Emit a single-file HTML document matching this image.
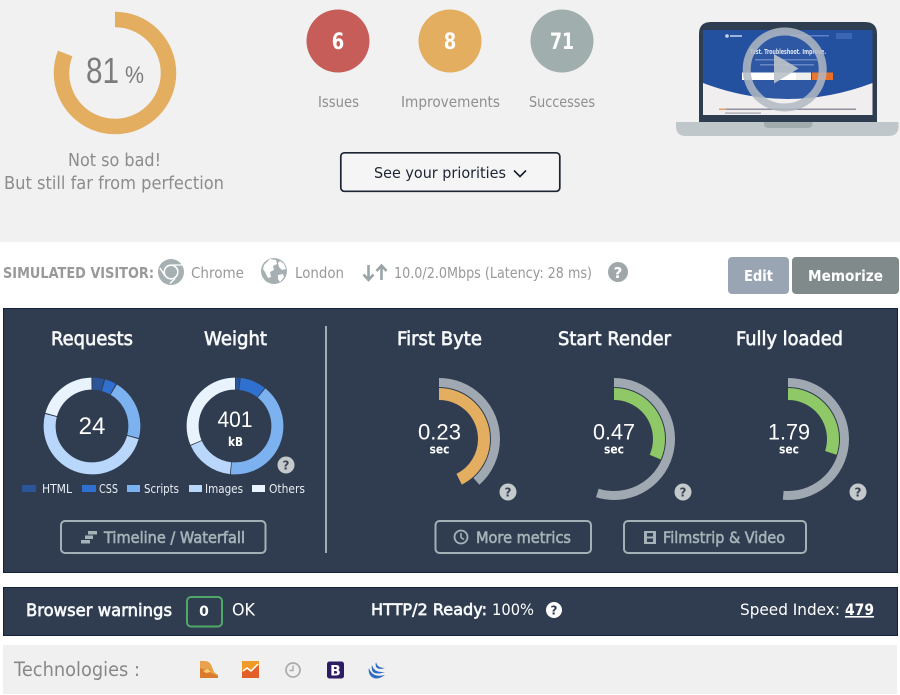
<!DOCTYPE html>
<html><head><meta charset="utf-8"><title>Report</title>
<style>
html,body{margin:0;padding:0;background:#fff;width:900px;height:695px;overflow:hidden}
svg{display:block}
text{font-family:"DejaVu Sans","Liberation Sans",sans-serif}
.l{font-family:"Liberation Sans",sans-serif}
.w{fill:#f6f8fa;stroke:#f6f8fa;stroke-width:.65}
.g{fill:#a5b3b8;stroke:#a5b3b8;stroke-width:.6}
circle.a{fill:none}
</style></head><body>
<svg width="900" height="695" viewBox="0 0 900 695" xmlns="http://www.w3.org/2000/svg">
<rect width="900" height="242" fill="#f1f1f2"/>
<!-- score ring -->
<circle class="a" cx="115" cy="73" r="53.500" stroke="#e4ae60" stroke-width="15.500" pathLength="100" stroke-dasharray="81 100" transform="rotate(-90 115 73)"/>
<text class="l" x="86" y="83" font-size="36" fill="#7c7c7c" textLength="33" lengthAdjust="spacingAndGlyphs">81</text>
<text class="l" x="125" y="83" font-size="24" fill="#7c7c7c" textLength="19" lengthAdjust="spacingAndGlyphs">%</text>
<text x="68" y="166" font-size="17.500" fill="#8c8c8c" textLength="93" lengthAdjust="spacingAndGlyphs">Not so bad!</text>
<text x="4" y="189" font-size="17.500" fill="#8c8c8c" textLength="220" lengthAdjust="spacingAndGlyphs">But still far from perfection</text>
<!-- counters -->
<circle cx="338" cy="41" r="31.500" fill="#c65d59"/>
<circle cx="450" cy="41" r="31.500" fill="#e4ae60"/>
<circle cx="562" cy="41" r="31.500" fill="#a1aeae"/>
<text x="338" y="49" font-size="22" font-weight="700" fill="#fff" text-anchor="middle" textLength="12.500" lengthAdjust="spacingAndGlyphs">6</text>
<text x="450" y="49" font-size="22" font-weight="700" fill="#fff" text-anchor="middle" textLength="12.500" lengthAdjust="spacingAndGlyphs">8</text>
<text x="562" y="49" font-size="22" font-weight="700" fill="#fff" text-anchor="middle" textLength="24" lengthAdjust="spacingAndGlyphs">71</text>
<text x="318" y="107" font-size="15" fill="#8f8f8f" textLength="41" lengthAdjust="spacingAndGlyphs">Issues</text>
<text x="401" y="107" font-size="15" fill="#8f8f8f" textLength="99" lengthAdjust="spacingAndGlyphs">Improvements</text>
<text x="529" y="107" font-size="15" fill="#8f8f8f" textLength="66" lengthAdjust="spacingAndGlyphs">Successes</text>
<rect x="340.800" y="152.800" width="219" height="38.500" rx="3.500" fill="#f5f5f5" stroke="#1c2433" stroke-width="1.700"/>
<text x="374" y="178" font-size="15.500" fill="#1c2433" textLength="132" lengthAdjust="spacingAndGlyphs">See your priorities</text>
<path d="M514 170.500l6 6 6-6" fill="none" stroke="#1c2433" stroke-width="1.700"/>
<!-- laptop -->
<path d="M699 122V34q0-12 12-12h154q12 0 12 12v88z" fill="#2f3d50"/>
<path d="M676 122h222.500v4q0 10-10 10H686q-10 0-10-10z" fill="#bfc7ca"/>
<path d="M764 122h48.500v2q0 4-5 4H769q-5 0-5-4z" fill="#a0adac"/>
<rect x="703" y="30" width="169.500" height="85" fill="#f0eeee"/>
<path d="M703 30h169.500v53q-85 32-169.500 0z" fill="#2450a0"/>
<circle cx="727" cy="36" r="1.800" fill="#c8d4ea"/><rect x="730" y="35" width="12" height="2" fill="#9fb4da"/>
<rect x="791" y="35" width="38" height="1.500" fill="#5f82c2"/>
<rect x="836" y="33" width="16" height="6" fill="#3a66b4"/>
<text x="750" y="54" font-size="7" font-weight="700" fill="#dfe6f3" textLength="76" lengthAdjust="spacingAndGlyphs">Test. Troubleshoot. Improve.</text>
<rect x="755" y="59" width="62" height="1.500" fill="#5f82c2"/><rect x="760" y="64" width="54" height="1.500" fill="#5f82c2"/>
<rect x="742" y="72.500" width="54" height="7.500" fill="#fff"/><rect x="796" y="72.500" width="15" height="7.500" fill="#eeeeee"/><rect x="812" y="72.500" width="21" height="7.500" fill="#e86f28"/>
<rect x="719" y="108.500" width="137" height="1.500" fill="#8f8f9e"/><rect x="719" y="108.500" width="7" height="1.500" fill="#e8a060"/>
<rect x="725" y="112.500" width="36" height="1.200" fill="#a0a0ac"/>
<circle cx="784.700" cy="69.500" r="38" fill="#fff" fill-opacity=".05" stroke="#b2b8c2" stroke-opacity=".85" stroke-width="8"/>
<path d="M774 54l24.500 14.500L774 83.500z" fill="#bcc1c9" fill-opacity=".92"/>
<!-- visitor row -->
<text x="3" y="278" font-size="15" font-weight="700" fill="#999" textLength="151" lengthAdjust="spacingAndGlyphs">SIMULATED VISITOR:</text>
<circle cx="171" cy="272" r="13" fill="#a6b0b2"/>
<circle cx="171" cy="272" r="6.800" fill="none" stroke="#fff" stroke-width="1.600"/>
<path d="M172 265h10M165 276l-5-8M175 278.500l-5 5" stroke="#fff" stroke-width="1.300" fill="none"/>
<text x="191" y="278" font-size="15" fill="#999" textLength="53" lengthAdjust="spacingAndGlyphs">Chrome</text>
<circle cx="274" cy="271" r="13" fill="#a6b0b2"/>
<path d="M264 265l6-6 6 1 1 4-4 2 1 4-4 2 1 5-3 1-3-6-2-3zM280 261l4 3 2 5-4 1-3-3-1-4zM278 275l5-1 1 3-4 5-2-3z" fill="#fff"/>
<text x="295" y="278" font-size="15" fill="#999" textLength="49" lengthAdjust="spacingAndGlyphs">London</text>
<path d="M368.500 265v14M363.500 274.500l5 5.500 5-5.500M381.500 280v-14M376.500 271l5-5.500 5 5.500" fill="none" stroke="#9aa5a8" stroke-width="2.600"/>
<text x="394" y="278" font-size="15" fill="#999" textLength="198" lengthAdjust="spacingAndGlyphs">10.0/2.0Mbps (Latency: 28 ms)</text>
<circle cx="618" cy="272" r="10" fill="#9fa7aa"/>
<text x="618" y="278" font-size="15" font-weight="700" fill="#fff" text-anchor="middle">?</text>
<rect x="728" y="257" width="61" height="37" rx="4" fill="#9aa5b3"/>
<rect x="792" y="257" width="107" height="37" rx="4" fill="#808a8a"/>
<text x="744" y="281" font-size="15.500" font-weight="700" fill="#fff" textLength="29" lengthAdjust="spacingAndGlyphs">Edit</text>
<text x="808" y="281" font-size="15.500" font-weight="700" fill="#fff" textLength="75" lengthAdjust="spacingAndGlyphs">Memorize</text>
<!-- main panel -->
<rect x="3.500" y="308.500" width="894" height="264" fill="#303d50" stroke="#15233a"/>
<g font-size="18.500">
<text class="w" x="51" y="345" textLength="82" lengthAdjust="spacingAndGlyphs">Requests</text>
<text class="w" x="204" y="345" textLength="63" lengthAdjust="spacingAndGlyphs">Weight</text>
<text class="w" x="397" y="345" textLength="85" lengthAdjust="spacingAndGlyphs">First Byte</text>
<text class="w" x="558" y="345" textLength="113" lengthAdjust="spacingAndGlyphs">Start Render</text>
<text class="w" x="736" y="345" textLength="107" lengthAdjust="spacingAndGlyphs">Fully loaded</text>
</g>
<rect x="325" y="326" width="2" height="227" fill="#a3abb3"/>
<!-- requests donut -->
<g fill="none" stroke-width="12" transform="rotate(-90 92 426)">
<circle cx="92" cy="426" r="42.400" stroke="#2a5699" pathLength="100" stroke-dasharray="3.800 100" stroke-dashoffset="-0.200"/>
<circle cx="92" cy="426" r="42.400" stroke="#2f70d0" pathLength="100" stroke-dasharray="3.800 100" stroke-dashoffset="-4.400"/>
<circle cx="92" cy="426" r="42.400" stroke="#7db2f0" pathLength="100" stroke-dasharray="20.400 100" stroke-dashoffset="-8.600"/>
<circle cx="92" cy="426" r="42.400" stroke="#b9d7fb" pathLength="100" stroke-dasharray="49.600 100" stroke-dashoffset="-29.400"/>
<circle cx="92" cy="426" r="42.400" stroke="#e8f3fe" pathLength="100" stroke-dasharray="20.400 100" stroke-dashoffset="-79.400"/>
</g>
<text class="l" x="92" y="434" font-size="24" fill="#fff" text-anchor="middle">24</text>
<!-- weight donut -->
<g fill="none" stroke-width="12" transform="rotate(-90 235 426)">
<circle cx="235" cy="426" r="42.400" stroke="#2a5699" pathLength="100" stroke-dasharray="1.400 100" stroke-dashoffset="-0.200"/>
<circle cx="235" cy="426" r="42.400" stroke="#2f70d0" pathLength="100" stroke-dasharray="8.600 100" stroke-dashoffset="-1.900"/>
<circle cx="235" cy="426" r="42.400" stroke="#7db2f0" pathLength="100" stroke-dasharray="40.600 100" stroke-dashoffset="-10.800"/>
<circle cx="235" cy="426" r="42.400" stroke="#b9d7fb" pathLength="100" stroke-dasharray="16.600 100" stroke-dashoffset="-51.700"/>
<circle cx="235" cy="426" r="42.400" stroke="#e8f3fe" pathLength="100" stroke-dasharray="31.400 100" stroke-dashoffset="-68.600"/>
</g>
<text class="l" x="235" y="427" font-size="22" fill="#fff" text-anchor="middle" textLength="35" lengthAdjust="spacingAndGlyphs">401</text>
<text x="235.500" y="446" font-size="12.500" font-weight="700" fill="#fff" text-anchor="middle" textLength="15" lengthAdjust="spacingAndGlyphs">kB</text>
<circle cx="286" cy="465" r="8.500" fill="#c4cacc"/>
<text x="286" y="469.500" font-size="12" font-weight="700" fill="#3a4454" text-anchor="middle">?</text>
<!-- legend -->
<rect x="22" y="485" width="14" height="7" fill="#2a5699"/>
<rect x="82" y="485" width="14" height="7" fill="#2f70d0"/>
<rect x="127" y="485" width="13" height="7" fill="#7db2f0"/>
<rect x="189" y="485" width="13" height="7" fill="#b9d7fb"/>
<rect x="252" y="485" width="13" height="7" fill="#e8f3fe"/>
<g font-size="12" fill="#e8edf2">
<text x="42" y="493" textLength="30" lengthAdjust="spacingAndGlyphs">HTML</text>
<text x="99" y="493" textLength="19" lengthAdjust="spacingAndGlyphs">CSS</text>
<text x="144" y="493" textLength="35" lengthAdjust="spacingAndGlyphs">Scripts</text>
<text x="205" y="493" textLength="38" lengthAdjust="spacingAndGlyphs">Images</text>
<text x="269" y="493" textLength="36" lengthAdjust="spacingAndGlyphs">Others</text>
</g>
<!-- gauges -->
<g fill="none">
<g transform="rotate(-90 439 439)">
<circle cx="439" cy="439" r="56.500" stroke="#a0a8b2" stroke-width="9" pathLength="100" stroke-dasharray="38.500 200"/>
<circle cx="439" cy="439" r="45" stroke="#e4ae60" stroke-width="12" pathLength="100" stroke-dasharray="42.600 200"/>
</g>
<g transform="rotate(-90 614 439)">
<circle cx="614" cy="439" r="56.500" stroke="#a0a8b2" stroke-width="9" pathLength="100" stroke-dasharray="54.800 200"/>
<circle cx="614" cy="439" r="45" stroke="#8fc866" stroke-width="12" pathLength="100" stroke-dasharray="31.600 200"/>
</g>
<g transform="rotate(-90 788 439)">
<circle cx="788" cy="439" r="56.500" stroke="#a0a8b2" stroke-width="9" pathLength="100" stroke-dasharray="51.400 200"/>
<circle cx="788" cy="439" r="45" stroke="#8fc866" stroke-width="12" pathLength="100" stroke-dasharray="30 200"/>
</g>
</g>
<g fill="#fff" text-anchor="middle">
<text class="l" x="439.500" y="439.500" font-size="22" textLength="43" lengthAdjust="spacingAndGlyphs">0.23</text>
<text class="l" x="614" y="439.500" font-size="22" textLength="42" lengthAdjust="spacingAndGlyphs">0.47</text>
<text class="l" x="789" y="439.500" font-size="22" textLength="42" lengthAdjust="spacingAndGlyphs">1.79</text>
<text x="439.500" y="453.500" font-size="12.500" font-weight="700" textLength="20" lengthAdjust="spacingAndGlyphs">sec</text>
<text x="614" y="453.500" font-size="12.500" font-weight="700" textLength="20" lengthAdjust="spacingAndGlyphs">sec</text>
<text x="789" y="453.500" font-size="12.500" font-weight="700" textLength="20" lengthAdjust="spacingAndGlyphs">sec</text>
</g>
<circle cx="508" cy="492" r="8.500" fill="#c4cacc"/><circle cx="683" cy="492" r="8.500" fill="#c4cacc"/><circle cx="858" cy="492" r="8.500" fill="#c4cacc"/>
<g font-size="12" font-weight="700" fill="#3a4454" text-anchor="middle">
<text x="508" y="496.500">?</text><text x="683" y="496.500">?</text><text x="858" y="496.500">?</text>
</g>
<!-- buttons -->
<g fill="none" stroke="#a3b1b6" stroke-width="2">
<rect x="61" y="521" width="204.500" height="32" rx="4"/>
<rect x="435.500" y="521" width="155.500" height="32" rx="4"/>
<rect x="624" y="521" width="182" height="32" rx="4"/>
</g>
<g font-size="16">
<text class="g" x="104" y="543" textLength="141" lengthAdjust="spacingAndGlyphs">Timeline / Waterfall</text>
<text class="g" x="476" y="543" textLength="95" lengthAdjust="spacingAndGlyphs">More metrics</text>
<text class="g" x="663" y="543" textLength="122" lengthAdjust="spacingAndGlyphs">Filmstrip &amp; Video</text>
</g>
<path d="M88 531h9v3.500h-9zM85 535.500h8v3.500h-8zM81 540h9v3.500h-9z" fill="#a5b3b8"/>
<circle cx="461" cy="537" r="6.500" fill="none" stroke="#a5b3b8" stroke-width="1.800"/>
<path d="M461 533v4.500l3 2" fill="none" stroke="#a5b3b8" stroke-width="1.500"/>
<path d="M644 531h12v13h-12zM647 533v3.500h6V533zM647 538.500V542h6v-3.500z" fill="#a5b3b8" fill-rule="evenodd"/>
<!-- second panel -->
<rect x="3.500" y="587.500" width="894" height="48" fill="#303d50" stroke="#15233a"/>
<text class="w" x="26" y="616" font-size="17" textLength="146" lengthAdjust="spacingAndGlyphs">Browser warnings</text>
<rect x="187" y="597" width="35" height="29.500" rx="4" fill="none" stroke="#4fa868" stroke-width="2"/>
<text x="204" y="616" font-size="14" font-weight="700" fill="#fff" text-anchor="middle">0</text>
<text x="232" y="615.500" font-size="16.500" fill="#fff" textLength="23" lengthAdjust="spacingAndGlyphs">OK</text>
<text class="w" x="371" y="615" font-size="16" textLength="116" lengthAdjust="spacingAndGlyphs">HTTP/2 Ready:</text>
<text x="492" y="615" font-size="16" fill="#fff" textLength="42" lengthAdjust="spacingAndGlyphs">100%</text>
<circle cx="554" cy="610" r="8" fill="#fff"/>
<text x="554" y="614.500" font-size="12" font-weight="700" fill="#303d50" text-anchor="middle">?</text>
<text x="740" y="615" font-size="16" fill="#fff" textLength="100" lengthAdjust="spacingAndGlyphs">Speed Index:</text>
<text x="845" y="615" font-size="16" font-weight="700" fill="#fff" text-decoration="underline" textLength="29" lengthAdjust="spacingAndGlyphs">479</text>
<!-- technologies -->
<rect x="3" y="645" width="894" height="49" fill="#f0f0f0"/>
<text x="14" y="676" font-size="19.500" fill="#888" textLength="126" lengthAdjust="spacingAndGlyphs">Technologies :</text>
<path d="M200 661h5q5 0 7 6l2 5 4 3v3h-18z" fill="#e9a24c"/>
<path d="M200 668q6 3 10 1l1 4 7 3v2h-18z" fill="#d97a2c"/>
<path d="M203 671l5-2 3 3-5 1z" fill="#f7cf7a"/>
<rect x="242" y="661" width="17" height="17" fill="#f09a2a"/>
<path d="M242 678v-6l5-3 4 3 8-7v13z" fill="#e25f28"/>
<path d="M243 671l4-3 4 3 7-7" fill="none" stroke="#fff" stroke-width="1.500"/>
<circle cx="293" cy="670" r="7" fill="none" stroke="#aaa" stroke-width="1.700"/>
<path d="M293 665.500v5h-3.500" fill="none" stroke="#aaa" stroke-width="1.400"/>
<rect x="327" y="661.500" width="17" height="17" rx="2.500" fill="#2d1c63"/>
<text x="335.500" y="675.500" font-size="14" font-weight="700" fill="#fff" text-anchor="middle">B</text>
<path d="M369 668q3 10 16 7-10 7-15 0-2-3-1-7zM372 665q2 8 13 7-8 3-12 0-2-3-1-7zM376 662q1 6 9 6-6 2-8.500-.5-1.500-2-.5-5.500z" fill="#2d6cc0"/>
</svg>
</body></html>
